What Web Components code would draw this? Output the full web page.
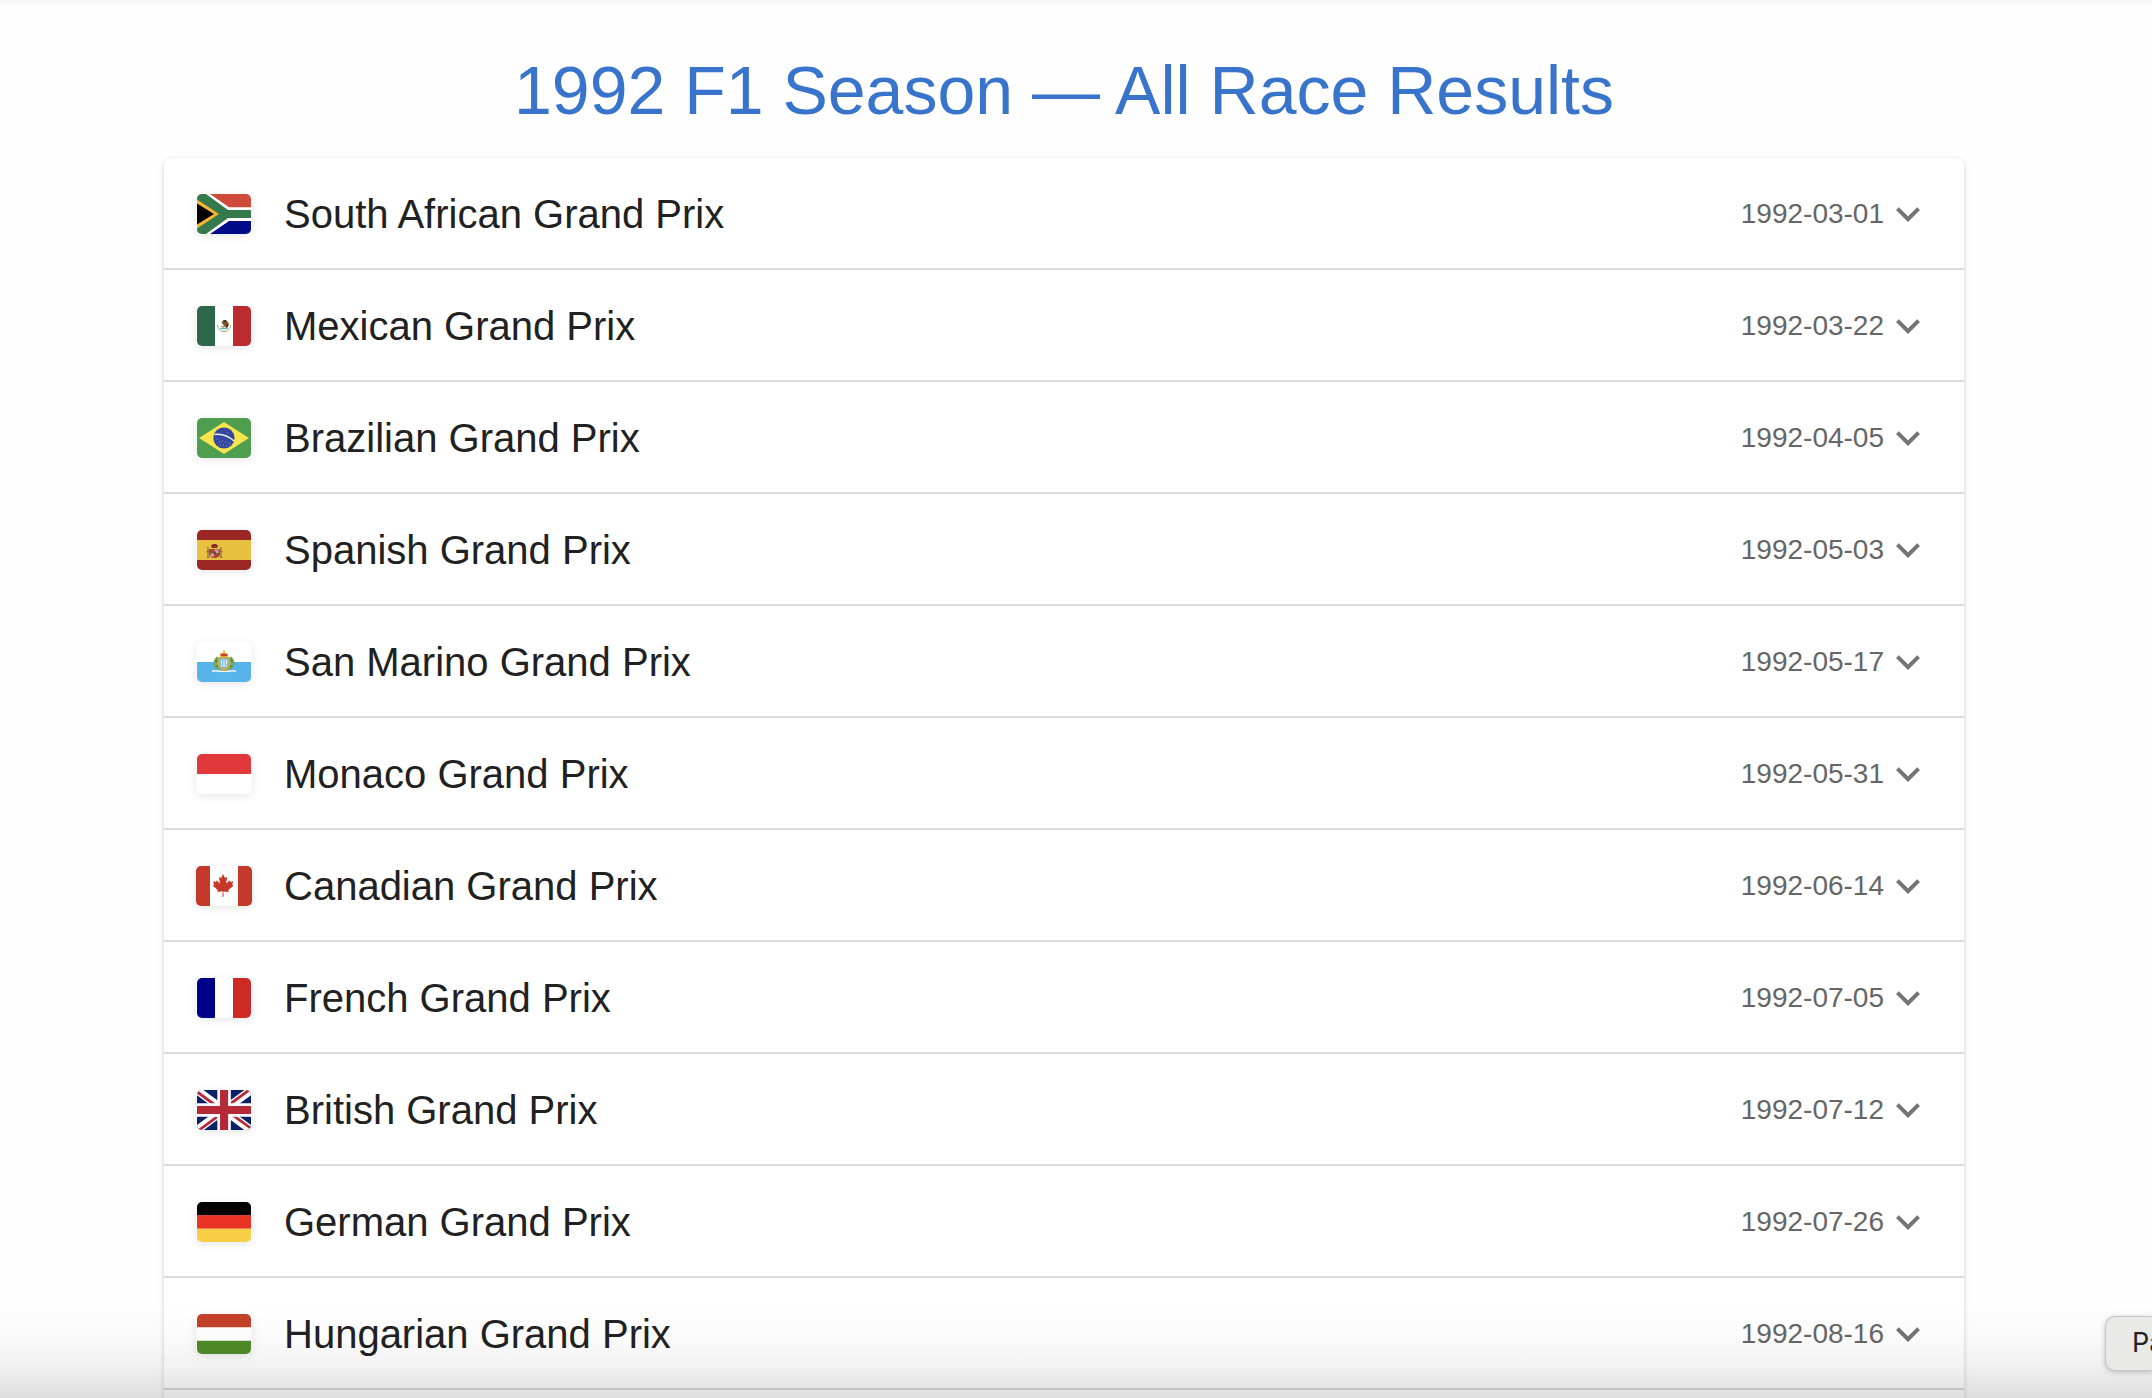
<!DOCTYPE html>
<html lang="en">
<head>
<meta charset="utf-8">
<title>1992 F1 Season</title>
<style>
html, body { margin: 0; height: 100%; overflow: hidden; }
body { background: #fefefe; font-family: "Liberation Sans", Arial, sans-serif; color: #212121; }
</style>
</head>
<body>
<season-page>
  <page-title slot="title">1992 F1 Season — All Race Results</page-title>
  <race-row country="za" date="1992-03-01">South African Grand Prix</race-row>
  <race-row country="mx" date="1992-03-22">Mexican Grand Prix</race-row>
  <race-row country="br" date="1992-04-05">Brazilian Grand Prix</race-row>
  <race-row country="es" date="1992-05-03">Spanish Grand Prix</race-row>
  <race-row country="sm" date="1992-05-17">San Marino Grand Prix</race-row>
  <race-row country="mc" date="1992-05-31">Monaco Grand Prix</race-row>
  <race-row country="ca" date="1992-06-14">Canadian Grand Prix</race-row>
  <race-row country="fr" date="1992-07-05">French Grand Prix</race-row>
  <race-row country="gb" date="1992-07-12">British Grand Prix</race-row>
  <race-row country="de" date="1992-07-26">German Grand Prix</race-row>
  <race-row country="hu" date="1992-08-16">Hungarian Grand Prix</race-row>
  <hover-tip slot="tip">Pa</hover-tip>
</season-page>
<script>
// Flag artwork on a 54x40 canvas (Canada is slightly wider).
const FLAGS = {
  za: `<path fill="#d04a3a" d="M0 0h54v20H0z"/><path fill="#000b87" d="M0 20h54v20H0z"/>
    <path fill="#fff" d="M0 0h13l19 13.3h22V27H32L13 40H0z"/>
    <path fill="#357a4c" d="M0 0h9l22 16h23v8H31L9 40H0z"/>
    <path fill="#f7b636" d="M0 5.5 22 20 0 34.5z"/><path fill="#000" d="M0 9.5 17 20 0 30.5z"/>`,
  mx: `<path fill="#fff" d="M0 0h54v40H0z"/><path fill="#2b6748" d="M0 0h18v40H0z"/><path fill="#bc2b30" d="M36 0h18v40H36z"/>
    <path fill="none" stroke="#a9ad7b" stroke-width="1" d="M20.5 19c0 4 3 6.500 6.500 6.500s6.500-2.500 6.500-6.500"/>
    <path fill="none" stroke="#6bbcc0" stroke-width="1.400" d="M23 22.500h8"/>
    <path fill="#7f5530" d="M24.500 16.500c1-2 3.500-3 5.500-1.500 1.500 1 2 3 1.500 5l-2 2.500-1.500-2-3 .5 2-1.500-1.500-1.500z"/>
    <path fill="#3c2a1c" d="m26 14.500 2.500-.7 1.200 1.800-2 .6zM29.500 18l1.800-.5-.5 3-1.300.6z"/>
    <path fill="none" stroke="#b88e45" d="m24 20 2.500 1.500M25.500 25.500h3"/>`,
  br: `<path fill="#4f9e4f" d="M0 0h54v40H0z"/><path fill="#f6e64c" d="m27 4 25 16-25 16L2 20z"/>
    <circle cx="27" cy="20" r="10.600" fill="#3548a0"/>
    <path fill="none" stroke="#e6f3ea" stroke-width="1.600" d="M17.500 16.500c7-1 14 1.500 19.500 6.500"/>
    <path stroke="#a9b5dc" stroke-width=".8" d="M20 21h1m1 3h1m2-1h1m-3 4h1m2 0h1m1-3h1m0 4h1m1-3h1m1 1h1m-4-11h1"/>`,
  es: `<path fill="#9b2724" d="M0 0h54v40H0z"/><path fill="#e7c13f" d="M0 10h54v20H0z"/>
    <path fill="#a5482c" d="M12 19h11v5.500c0 2-3 3.500-5.500 3.500S12 26.500 12 24.500z"/>
    <path fill="#c9a6a0" d="M17.500 19.500h4v3.500h-4zM13.500 23.500h3.500v3h-3.500z"/>
    <path fill="#8d2b25" d="M14 15.500 16 14h3l2 1.500-.8 2.500h-5.400z"/><path fill="#534b83" d="M16.500 21.500h2.500v2.500h-2.500z"/>
    <path stroke="#8b7355" stroke-width="1.300" d="M11 17v10M24 17v10"/>
    <path stroke="#b75a3b" d="M9.500 21.500h3M22.500 21.500h3M10 27.500h2.500m10.500 0h2.500"/>`,
  sm: `<path fill="#fff" d="M0 0h54v20H0z"/><path fill="#57b3e9" d="M0 20h54v20H0z"/>
    <path fill="#76ab5b" d="M20 14.500c-4 3-5 8.500-1 12l4 1.500 1-12zM34 14.500c4 3 5 8.500 1 12L31 28l-1-12z"/>
    <path fill="#4f8e50" d="m18 18 2-2 1 3-2 2zm0 6 3-1v3zm18-6-2-2-1 3 2 2zm0 6-3-1v3z"/>
    <path fill="#72bcf0" stroke="#d2ac3c" stroke-width="1.800" d="M21.500 16.500c3.500-1.500 7.500-1.500 11 0v5.500c0 3-2.500 4.500-5.500 5.500-3-1-5.500-2.500-5.500-5.500z"/>
    <path fill="none" stroke="#f1f6f8" stroke-width="1.200" d="M24.500 18v4.500M27 17.500v6m2.500-5.500v4.500M24 24h6"/>
    <path fill="#dda72c" d="m23 11 2 .5 1.500-2V8h1v1.500l1.500 2 2-.5-.5 4h-7z"/><path fill="#d23b2e" d="M23.500 12h7l-.5 2h-6z"/>
    <path fill="none" stroke="#f4f7f9" stroke-width="1.500" d="M15 29.500c4-2 7 1 12-.5 5 1.500 8-1.500 12 .5"/><path stroke="#c9a64a" d="M24 28.500h6"/>`,
  mc: `<path fill="#fff" d="M0 0h54v40H0z"/><path fill="#e0383b" d="M0 0h54v20H0z"/>`,
  ca: `<path fill="#fff" d="M0 0h56v40H0z"/><path fill="#c5392a" d="M0 0h14v40H0zM42 0h14v40H42z"/>
    <path fill="#c5392a" transform="translate(1.200 .2) scale(.082)" d="m201 232-13.300 4.400 61.400 54c4.700 13.700-1.600 17.800-5.600 25l66.600-8.400-1.600 67 13.900-.3-3.100-66.600 66.700 8c-4.100-8.700-7.800-13.300-4-27.200l61.300-51-10.700-4c-8.800-6.800 3.800-32.600 5.600-48.900 0 0-35.700 12.300-38 5.800l-9.200-17.500-32.600 35.800c-3.500.9-5-.5-5.900-3.500l15-74.800-23.800 13.400c-2 .9-4 .1-5.200-2.200l-23-46-23.600 47.800c-1.800 1.700-3.600 1.900-5 .7L264 130.800l13.700 74.100c-1.100 3-3.700 3.800-6.700 2.200l-31.200-35.300c-4 6.500-6.800 17.100-12.200 19.500-5.400 2.300-23.500-4.500-35.600-7 4.200 14.800 17 39.600 9 47.700z"/>`,
  fr: `<path fill="#fff" d="M0 0h54v40H0z"/><path fill="#000088" d="M0 0h18v40H0z"/><path fill="#cd2a25" d="M36 0h18v40H36z"/>`,
  gb: `<g transform="scale(.084375 .083334)"><path fill="#0c2066" d="M0 0h640v480H0z"/>
    <path fill="#fff" d="m75 0 244 181L562 0h78v62L400 241l240 178v61h-80L320 301 81 480H0v-60l239-178L0 64V0z"/>
    <path fill="#b62a37" d="m424 281 216 159v40L369 281zm-184 20 6 35L54 480H0zM640 0v3L391 191l2-44L590 0zM0 0l239 176h-60L0 42z"/>
    <path fill="#fff" d="M241 0v480h160V0zM0 160v160h640V160z"/>
    <path fill="#b62a37" d="M0 193v96h640v-96zM273 0v480h96V0z"/></g>`,
  de: `<path d="M0 0h54v13.400H0z"/><path fill="#ea3324" d="M0 13.300h54v13.400H0z"/><path fill="#f7cf46" d="M0 26.700h54V40H0z"/>`,
  hu: `<path fill="#fff" d="M0 0h54v40H0z"/><path fill="#c4412a" d="M0 0h54v13.300H0z"/><path fill="#508b27" d="M0 26.700h54V40H0z"/>`
};

customElements.define('country-flag', class extends HTMLElement {
  connectedCallback() {
    const code = this.getAttribute('code');
    const w = code === 'ca' ? 56 : 54;
    this.attachShadow({ mode: 'open' }).innerHTML = `
      <style>
        :host { display: flex; justify-content: center; flex: none; width: 56px; height: 40px;
          border-radius: 6px; background: #fff; box-shadow: 0 2px 8px rgba(0, 0, 0, .1); }
        svg { display: block; border-radius: 5px; }
      </style>
      <svg width="${w}" height="40" viewBox="0 0 ${w} 40" aria-hidden="true">${FLAGS[code]}</svg>`;
  }
});

customElements.define('race-row', class extends HTMLElement {
  connectedCallback() {
    this.attachShadow({ mode: 'open' }).innerHTML = `
      <style>
        :host { display: block; }
        button { display: flex; align-items: center; width: 100%; height: 112px; padding: 0 32px;
          border: 0; background: none; box-shadow: inset 0 -2px #dbdbdb; font: inherit; color: inherit;
          text-align: left; cursor: pointer; }
        .name { flex: 1; margin-left: 32px; font-size: 40px; line-height: 64px; }
        time { font-size: 28px; line-height: 40px; color: #666; }
        .chevron { flex: none; width: 48px; height: 48px; fill: #757575; }
      </style>
      <button type="button" aria-expanded="false">
        <country-flag code="${this.getAttribute('country')}"></country-flag>
        <span class="name"><slot></slot></span>
        <time>${this.getAttribute('date')}</time>
        <svg class="chevron" viewBox="0 0 24 24" aria-hidden="true"><path d="M16.590 8.590 12 13.170 7.410 8.590 6 10l6 6 6-6z"/></svg>
      </button>`;
  }
});

customElements.define('page-title', class extends HTMLElement {
  connectedCallback() {
    this.attachShadow({ mode: 'open' }).innerHTML = `
      <style>
        :host { display: block; }
        h1 { margin: 48px 0 26px; font-size: 68px; line-height: 84px; font-weight: 400;
          text-align: center; color: #3873cc; }
      </style>
      <h1><slot></slot></h1>`;
  }
});

customElements.define('hover-tip', class extends HTMLElement {
  connectedCallback() {
    this.attachShadow({ mode: 'open' }).innerHTML = `
      <style>
        :host { position: absolute; right: 0; bottom: 28px; box-sizing: border-box; width: 46px; height: 53px;
          padding-left: 26px; border-radius: 9px 0 0 9px; background: #e9e9e7; color: #222;
          box-shadow: 0 0 0 1px #c6c6c6, 0 1px 6px rgba(0, 0, 0, .3);
          font: 27px/52px Inter, sans-serif; white-space: nowrap; overflow: hidden; }
      </style>
      <slot></slot>`;
  }
});

customElements.define('season-page', class extends HTMLElement {
  connectedCallback() {
    this.attachShadow({ mode: 'open' }).innerHTML = `
      <style>
        :host { display: flex; flex-direction: column; position: relative; height: 100vh; box-sizing: border-box;
          padding-right: 24px; overflow: hidden; background: linear-gradient(#f6f6f6, #fefefe 6px); }
        main { flex: 1; width: calc(100% - 48px); max-width: 1800px; margin: 0 auto; border-radius: 8px 8px 0 0;
          background: #fff; box-shadow: 0 2px 4px rgba(0, 0, 0, .14), 0 2px 8px rgba(0, 0, 0, .06); }
        .fade { position: absolute; inset: auto 0 0; height: 96px; pointer-events: none;
          background: linear-gradient(transparent, rgba(0, 0, 0, .015) 35%, rgba(0, 0, 0, .055) 68%, rgba(0, 0, 0, .13)); }
      </style>
      <slot name="title"></slot>
      <main><slot></slot></main>
      <div class="fade"></div>
      <slot name="tip"></slot>`;
  }
});
</script>
</body>
</html>
